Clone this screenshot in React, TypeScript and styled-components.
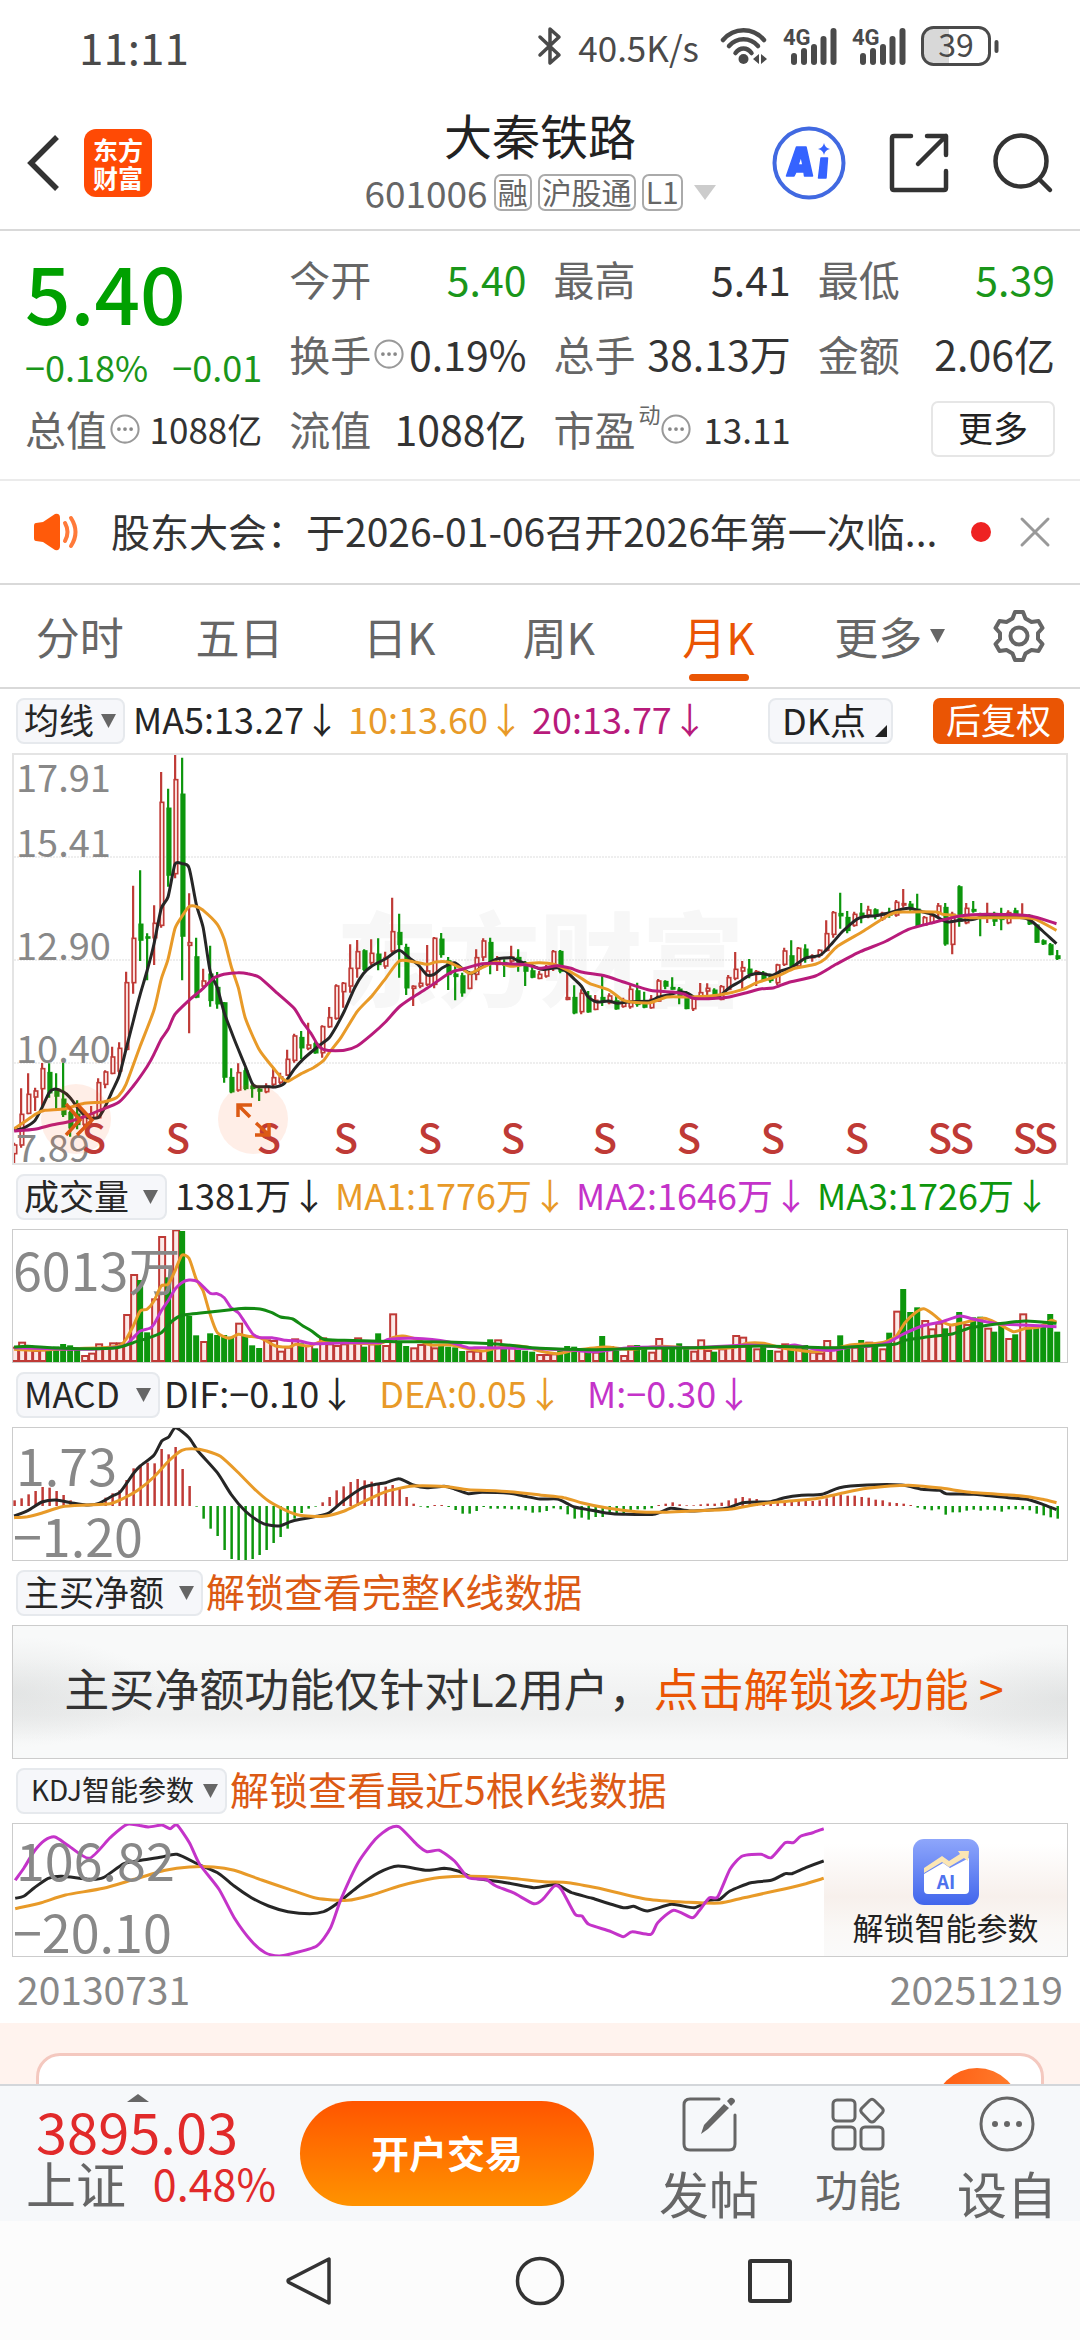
import React from 'react';
import styled, { createGlobalStyle } from 'styled-components';

const GlobalStyle = createGlobalStyle`
  *, *::before, *::after { box-sizing: border-box; }
  body {
    margin: 0;
    background: #fff;
    color: #222;
    font-family: "Noto Sans CJK SC", "Noto Sans", sans-serif;
    font-size: 36px;
    line-height: 1;
  }
  button, select {
    font: inherit;
    color: inherit;
    margin: 0;
    padding: 0;
    border: 0;
    background: none;
  }
  svg { display: block; flex: none; overflow: visible; }
`;

const C = {
  ink: '#262626',
  grey: '#666',
  mute: '#888',
  line: '#d9d9d9',
  red: '#bf3a36',
  green: '#0d960d',
  orange: '#ea5504',
  amber: '#e89a28',
  magenta: '#b81b7b',
  violet: '#c433c9',
};

/* ---------- layout ---------- */

const Screen = styled.div`
  display: flex;
  flex-direction: column;
  height: 100vh;
  overflow: hidden;
`;

const Scroller = styled.main`
  flex: 1;
  min-height: 0;
  overflow-y: auto;
  scrollbar-width: none;
`;

/* ---------- status bar ---------- */

const StatusBar = styled.div`
  display: flex;
  align-items: center;
  justify-content: space-between;
  height: 96px;
  padding: 0 81px 4px 79px;
  color: #4a4a4a;
`;

const Clock = styled.time`
  font-size: 44px;
`;

const StatusIcons = styled.div`
  display: flex;
  align-items: center;
  gap: 15px;
`;

const Speed = styled.span`
  margin-right: 6px;
  font-size: 35px;
`;

const Signal = styled.span`
  display: flex;
`;

/* ---------- header ---------- */

const Header = styled.header`
  display: grid;
  grid-template-columns: 1fr auto 1fr;
  align-items: center;
  height: 135px;
  padding: 0 26px;
  border-bottom: 2px solid ${C.line};
`;

const HeaderSide = styled.div<{ $end?: boolean }>`
  display: flex;
  align-items: center;
  gap: ${(p) => (p.$end ? 43 : 24)}px;
  justify-content: ${(p) => (p.$end ? 'flex-end' : 'flex-start')};
`;

const IconButton = styled.button`
  display: flex;
  align-items: center;
  justify-content: center;
`;

const Logo = styled.div`
  display: grid;
  place-content: center;
  width: 68px;
  height: 68px;
  border-radius: 12px;
  background: #ff4a05;
  color: #fff;
  font-size: 25px;
  font-weight: 700;
  line-height: 28px;
  text-align: center;
`;

const TitleBlock = styled.div`
  display: flex;
  flex-direction: column;
  align-items: center;
  gap: 16px;
  padding-bottom: 4px;
`;

const Title = styled.h1`
  margin: 0;
  font-size: 48px;
  font-weight: 400;
  line-height: 48px;
`;

const CodeRow = styled.div`
  display: flex;
  align-items: center;
  gap: 6px;
  color: ${C.grey};
  font-size: 37px;
`;

const Tag = styled.span`
  height: 37px;
  padding: 0 2px;
  border: 2px solid #aaa;
  border-radius: 7px;
  font-size: 30px;
  line-height: 31px;
`;

const TagCaret = styled.span`
  margin-left: 5px;
`;

/* ---------- quote ---------- */

const Quote = styled.section`
  display: grid;
  grid-template-columns: repeat(4, 1fr);
  grid-auto-rows: 75px;
  column-gap: 27px;
  padding: 10px 25px 13px;
  border-bottom: 2px solid #ebebeb;
`;

const PriceBlock = styled.div`
  grid-row: span 2;
  display: flex;
  flex-direction: column;
  color: #00a000;
`;

const Price = styled.strong`
  font-size: 80px;
  font-weight: 500;
  line-height: 98px;
`;

const Change = styled.div`
  display: flex;
  justify-content: space-between;
  font-size: 36px;
  line-height: 54px;
  color: #1a961a;
`;

const Stat = styled.div`
  display: flex;
  align-items: center;
  justify-content: space-between;
  white-space: nowrap;
`;

const StatLabel = styled.span`
  display: flex;
  align-items: center;
  gap: 3px;
  color: ${C.grey};
  font-size: 41px;
`;

const Raised = styled.sup`
  align-self: flex-start;
  margin-right: -3px;
  font-size: 22px;
  line-height: 10px;
  vertical-align: baseline;
`;

const StatValue = styled.span<{ $tone?: string; $small?: boolean }>`
  font-size: ${(p) => (p.$small ? 35 : 41)}px;
  color: ${(p) => p.$tone ?? '#333'};
`;

const MoreButton = styled.button`
  place-self: center end;
  width: 124px;
  height: 56px;
  padding-bottom: 5px;
  border: 2px solid #e6e6e6;
  border-radius: 7px;
  font-size: 35px;
`;

/* ---------- notice ---------- */

const Notice = styled.div`
  display: flex;
  align-items: center;
  height: 104px;
  padding: 0 29px 0 32px;
  border-bottom: 2px solid ${C.line};
`;

const NoticeText = styled.p`
  flex: 1;
  min-width: 0;
  margin: 0 0 0 31px;
  padding-bottom: 4px;
  overflow: hidden;
  color: #333;
  font-size: 39px;
  line-height: 60px;
  white-space: nowrap;
`;

const Dot = styled.span`
  width: 20px;
  height: 20px;
  margin-right: 28px;
  border-radius: 50%;
  background: #ee2222;
`;

/* ---------- period tabs ---------- */

const Tabs = styled.nav`
  display: flex;
  height: 104px;
  border-bottom: 2px solid ${C.line};
`;

const Tab = styled.button<{ $active?: boolean }>`
  position: relative;
  flex: 1;
  color: ${(p) => (p.$active ? C.orange : C.grey)};
  font-size: 44px;
  &::after {
    content: '';
    position: absolute;
    bottom: 6px;
    left: 50%;
    width: 60px;
    height: 7px;
    margin-left: -30px;
    border-radius: 4px;
    background: ${(p) => (p.$active ? C.orange : 'transparent')};
  }
`;

const TabCaret = styled.span`
  position: absolute;
  top: 44px;
  left: 50%;
  margin-left: 52px;
`;

const GearCell = styled(IconButton)`
  width: 122px;
`;

/* ---------- indicator rows ---------- */

const IndicatorRow = styled.div`
  display: flex;
  align-items: center;
  height: 64px;
  padding: 0 16px;
`;

const PickerBox = styled.label<{ $left: number; $right: number; $size: number }>`
  position: relative;
  display: flex;
  select {
    height: 46px;
    padding: 0 ${(p) => p.$right}px 4px ${(p) => p.$left}px;
    border: 2px solid #e6e9ed;
    border-radius: 8px;
    background: #f6f7fa;
    color: ${C.ink};
    font-size: ${(p) => p.$size}px;
    line-height: 38px;
    appearance: none;
  }
`;

const PickerCaret = styled.span`
  position: absolute;
  top: 16px;
  right: 9px;
  pointer-events: none;
`;

const Readings = styled.div<{ $wide?: boolean }>`
  display: flex;
  gap: ${(p) => (p.$wide ? 24 : 8)}px;
  margin-left: ${(p) => (p.$wide ? 4 : 8)}px;
  padding-bottom: 6px;
  white-space: nowrap;
`;

const Reading = styled.span<{ $tone: string }>`
  color: ${(p) => p.$tone};
`;

const RowEnd = styled.div`
  display: flex;
  gap: 40px;
  margin-left: auto;
`;

const DkButton = styled.button`
  display: flex;
  align-items: flex-end;
  gap: 9px;
  height: 46px;
  padding: 0 4px 5px 12px;
  border: 2px solid #e6e9ed;
  border-radius: 8px;
  background: #f6f7fa;
  font-size: 36px;
`;

const AdjustButton = styled.button`
  height: 46px;
  padding: 0 13px 5px;
  border-radius: 7px;
  background: ${C.orange};
  color: #fff;
  font-size: 35px;
`;

const UnlockLink = styled.a`
  margin-left: 3px;
  padding-bottom: 6px;
  color: #dc5a14;
  font-size: 39px;
  text-decoration: none;
`;

const Panel = styled.div<{ $strong?: boolean }>`
  margin: 0 12px;
  border: ${(p) => (p.$strong ? '2px solid #e4e4e4' : '1px solid #ccc')};
  svg { width: 100%; height: auto; overflow: hidden; }
`;

const LockedPanel = styled.div`
  display: flex;
  align-items: center;
  justify-content: center;
  height: 134px;
  margin: 0 12px;
  padding: 0 12px 10px 0;
  border: 1px solid #ccc;
  background:
    radial-gradient(ellipse 14% 42% at 0% 50%, rgba(205, 208, 208, .4), transparent),
    radial-gradient(ellipse 14% 42% at 100% 55%, rgba(205, 208, 208, .4), transparent),
    linear-gradient(#f8f9f9 25%, #f0f1f1 55%, #eff0f0 68%, #f8f9f9 88%);
  color: #333;
  font-size: 45px;
  white-space: nowrap;
  a { color: ${C.orange}; text-decoration: none; }
`;

const KdjPanel = styled.div`
  display: flex;
  margin: 0 12px;
  border: 1px solid #ccc;
`;

const KdjPlot = styled.div`
  flex: 811;
  svg { width: 100%; height: auto; overflow: hidden; }
`;

const AiUnlock = styled.button`
  flex: 243;
  display: flex;
  flex-direction: column;
  align-items: center;
  justify-content: center;
  gap: 6px;
  background: linear-gradient(#fff 15%, #f7f0ec 55%, #faf8f6 80%, #fafafa);
  font-size: 31px;
`;

const Dates = styled.div`
  display: flex;
  justify-content: space-between;
  height: 66px;
  padding: 0 17px;
  color: ${C.mute};
  font-size: 39px;
  line-height: 62px;
`;

const Promo = styled.section`
  padding: 30px 36px 0;
  background: #fff3ee;
`;

const PromoCard = styled.div`
  display: flex;
  justify-content: flex-end;
  height: 120px;
  padding: 12px 21px;
  border: 3px solid #f4c8bf;
  border-radius: 24px;
  background: #fff;
`;

const PromoBadge = styled.span`
  width: 86px;
  height: 86px;
  border-radius: 50%;
  background: linear-gradient(100deg, #ff5a10, #ff8534);
`;

/* ---------- bottom bars ---------- */

const ActionBar = styled.footer`
  display: flex;
  align-items: stretch;
  height: 137px;
  border-top: 2px solid #d3d6da;
  background: #f6f8fa;
`;

const IndexBlock = styled.button`
  display: flex;
  flex-direction: column;
  align-items: center;
  width: 300px;
  padding: 8px 24px 0 26px;
  color: #e12a2a;
`;

const IndexCaret = styled.span`
  margin-right: 26px;
`;

const IndexValue = styled.span`
  align-self: flex-start;
  margin-left: 10px;
  font-size: 56px;
  line-height: 56px;
`;

const IndexRow = styled.span`
  display: flex;
  align-items: center;
  justify-content: space-between;
  width: 100%;
  font-size: 43px;
  line-height: 48px;
`;

const IndexName = styled.span`
  color: ${C.grey};
  font-size: 50px;
`;

const TradeButton = styled.button`
  align-self: center;
  width: 294px;
  height: 105px;
  padding-bottom: 4px;
  border-radius: 53px;
  background: linear-gradient(#ff5500, #ff9300);
  color: #fff;
  font-size: 38px;
  font-weight: 700;
`;

const Actions = styled.div`
  flex: 1;
  display: flex;
  justify-content: space-between;
  padding: 0 23px 0 65px;
`;

const Action = styled.button<{ $compact?: boolean }>`
  display: flex;
  flex-direction: column;
  align-items: center;
  padding-top: 10px;
  gap: 10px;
  color: ${C.grey};
  font-size: ${(p) => (p.$compact ? 43 : 50)}px;
  line-height: ${(p) => (p.$compact ? 52 : 61)}px;
`;

const SystemNav = styled.div`
  display: flex;
  justify-content: center;
  align-items: center;
  gap: 180px;
  height: 119px;
  background: #fcfcfc;
`;

/* ---------- small drawings ---------- */

const Caret = ({ w = 15, h = 14, fill = '#666', up = false }: { w?: number; h?: number; fill?: string; up?: boolean }) => (
  <svg width={w} height={h} viewBox="0 0 10 10" preserveAspectRatio="none" aria-hidden="true">
    <path d={up ? 'M0 10H10L5 0Z' : 'M0 0H10L5 10Z'} fill={fill} />
  </svg>
);

const Info = () => (
  <svg width="30" height="30" viewBox="0 0 32 32" aria-hidden="true">
    <circle cx="16" cy="16" r="14.500" fill="none" stroke="#999" strokeWidth="2.200" />
    <circle cx="9.500" cy="16" r="2" fill="#888" />
    <circle cx="16" cy="16" r="2" fill="#888" />
    <circle cx="22.500" cy="16" r="2" fill="#888" />
  </svg>
);

const SignalBars = () => (
  <Signal>
    <svg width="54" height="38" viewBox="0 0 54 38" aria-label="4G">
      <text x="0" y="18" fontSize="22" fontWeight="700" fill="#4a4a4a" fontFamily="Roboto, sans-serif">4G</text>
      {[[11, 27], [21, 22], [31, 18], [40.5, 10], [50.5, 2]].map(([x, y]) => (
        <path key={x} d={`M${x} ${y + 2}V35`} stroke="#4a4a4a" strokeWidth="6" strokeLinecap="round" />
      ))}
    </svg>
  </Signal>
);

/* ---------- chart data ---------- */

// Samples are stored on a fine grid: 2.904 units per pixel across, 3 per pixel down.
const UX = 2.904;
const UY = 3;
const HALF = 1568;
const barX = (i: number) => (41 + 20.33 * i) / UX;

type Pt = [number, number];
const line = (left: string, right: string, top: number) => {
  const parse = (s: string, dx: number): Pt[] =>
    s.trim().split(/\s+/).filter(Boolean).map((p) => {
      const [x, y] = p.split(',').map(Number);
      return [(x + dx) / UX, top + y / UY];
    });
  return [...parse(left, 0), ...parse(right, HALF)];
};

const smooth = (pts: Pt[]) => {
  let d = `M${pts[0][0].toFixed(1)} ${pts[0][1].toFixed(1)}`;
  for (let i = 1; i < pts.length; i++) {
    const a = pts[Math.max(i - 2, 0)];
    const b = pts[i - 1];
    const c = pts[i];
    const e = pts[Math.min(i + 1, pts.length - 1)];
    const k = 9;
    d += `C${(b[0] + (c[0] - a[0]) / k).toFixed(1)} ${(b[1] + (c[1] - a[1]) / k).toFixed(1)} ${(c[0] - (e[0] - b[0]) / k).toFixed(1)} ${(c[1] - (e[1] - b[1]) / k).toFixed(1)} ${c[0].toFixed(1)} ${c[1].toFixed(1)}`;
  }
  return d;
};

// colour, high, body top, body bottom, low
const CANDLES = `R1205,1212,1238,1275 R1042,1120,1212,1220 R997,1060,1117,1120 R1040,1050,1068,1110 R966,983,1043,1100
G967,995,1055,1070 G997,1050,1065,1110 G966,1075,1120,1128 G1110,1115,1160,1187 G1078,1120,1150,1165
R1115,1128,1150,1160 R1095,1120,1130,1150 R1012,1025,1130,1133 R988,993,1030,1042 R917,948,997,1000
R904,922,990,1000 R692,725,925,930 R434,592,725,758 G388,550,597,660 G577,588,590,718
R493,547,590,672 R93,184,553,560 G143,202,402,437 R40,116,398,412 G50,160,585,718
R457,605,613,877 G590,648,768,772 R683,720,735,742 G614,700,778,797 G693,740,788,803
G783,786,1008,1025 G982,1010,1052,1057 R967,995,1047,1052 G980,990,1042,1048 G1030,1036,1042,1070
G1040,1045,1050,1080 R1027,1036,1052,1057 R984,1010,1030,1042 R995,1008,1024,1030 R926,955,1002,1005
R878,885,958,965 G870,890,920,955 R845,912,922,928 G900,908,935,938 R853,857,935,950
R798,830,857,860 R730,735,832,836 R723,727,752,800 R610,682,735,755 R597,632,682,710
G625,630,685,690 R595,637,665,672 G592,640,670,688 R632,650,675,683 R470,572,630,640
G518,575,610,710 G608,620,740,762 R733,736,742,795 R680,727,735,742 R612,690,730,735
R588,592,730,742 G576,595,640,650 G648,660,700,747 G668,700,706,778 G695,705,755,767
R690,700,742,745 R625,650,700,718 R592,600,648,660 G590,605,665,700 R645,655,670,690
G655,665,672,708 R614,648,660,670 G625,650,665,692 G660,670,690,735 G665,690,708,712
R690,700,712,715 R672,680,705,710 R627,632,680,690 G627,632,690,697 R695,770,775,778
G733,770,815,820 R745,757,812,820 G750,765,812,815 R762,778,805,808 G705,770,778,795
R757,765,785,790 G762,780,803,806 R770,785,796,800 R733,745,797,803 G725,750,790,797
G752,790,798,802 R762,775,800,803 R714,720,780,783 G718,722,735,745 G709,740,744,746
G738,745,765,790 G750,765,802,805 R765,770,803,810 R726,755,765,772 R727,742,750,765
G742,748,768,775 R732,737,775,778 R702,710,745,748 R633,685,712,718 R660,680,690,745
G654,685,697,712 R687,692,700,735 G690,697,715,720 G698,705,718,725 R668,672,725,732
R620,630,670,675 G598,645,675,685 R618,622,675,682 G610,625,650,665 R640,645,650,662
R625,628,642,650 R538,578,628,632 R510,515,580,590 G455,518,524,563 G510,530,568,577
R512,520,553,557 G486,517,525,547 R494,507,522,532 G502,507,525,535 R512,517,533,540
G500,515,522,530 R477,484,522,527 R444,488,492,500 G480,490,500,510 G458,505,553,557
R525,530,552,555 R518,525,545,550 R486,495,515,530 G486,500,608,614 R512,520,610,640
G433,438,540,557 R486,502,545,550 G480,506,510,515 G515,522,530,586 R485,522,530,546
G512,518,540,555 G500,525,535,568 R508,515,545,550 G500,510,520,527 R487,522,526,532
G520,524,548,552 G550,553,603,606 G595,600,608,612 G606,612,640,643 G627,645,652,657`
  .split(/\s+/)
  .map((s) => ({ up: s[0] === 'R', v: s.slice(1).split(',').map((n) => 740 + Number(n) / UY) }));

const nums = (s: string) => s.trim().split(/\s+/).map(Number);

const VOLUME = nums(`380 365 376 390 388 385 380 372 376 388 405 398 370 380 367 367 282 162 180 337 235 48 172 28 33
288 346 363 340 345 345 350 308 345 376 384 358 360 392 380 355 370 375 385 352 370 375 370 360 352
380 370 340 375 280 365 378 382 372 370 382 378 380 382 393 392 392 390 358 358 378 375 390 392 395
402 402 400 385 378 380 390 395 395 348 378 392 405 376 375 378 395 354 380 378 370 378 392 358 390
395 385 380 345 350 370 385 375 390 392 370 385 380 375 395 398 360 380 346 378 380 360 365 375 385
338 272 207 276 262 300 325 308 325 312 276 312 292 290 323 335 310 354 343 280 325 318 318 282 335`);
const VOLUME_DOWN = new Set([25, 79, 127]);

const HIST = nums(`838 832 820 810 798 800 810 822 838 848 853 850 845 830 817 808 777 742 733 725 727 684 700 678 744
795 857 893 923 945 987 1014 1017 1020 1014 1002 987 966 948 923 893 876 863 857 844 828 808 796 783 774
778 782 790 797 792 803 828 848 857 860 852 852 858 867 878 878 870 858 863 863 863 865 865 868 875
874 870 862 865 880 893 890 896 888 888 880 882 876 868 865 865 862 852 848 844 850 853 853 850 848
848 845 838 832 828 832 834 840 843 843 840 838 838 837 840 838 832 822 820 824 824 828 830 836 838
844 846 848 852 860 865 868 865 881 874 874 869 866 869 866 868 872 865 865 865 868 878 883 889 893`);

const MA5 = line(
  `41,1165 60,1165 80,1155 102,1138 122,1100 143,1055 160,1044 183,1052 204,1070 224,1098 250,1128 285,1130 305,1098 326,1050 346,1005 366,925 387,840 407,760 427,690 447,610 468,503 488,468 508,370 528,368 549,380 570,490 590,560 610,690 631,740 651,815 671,870 692,925 712,975 732,1027 745,1037 773,1037 800,1038 825,1028 854,985 880,955 925,915 956,890 980,850 1000,810 1030,740 1055,698 1080,675 1120,653 1159,628 1190,652 1215,672 1240,702 1261,700 1285,680 1320,665 1345,685 1370,697 1400,678 1440,655 1485,650 1505,660 1530,668`,
  `0,684 18,685 50,680 75,690 100,715 120,735 140,768 165,783 200,780 225,787 262,782 320,780 345,768 380,760 405,752 430,757 450,770 480,772 520,765 550,740 580,722 610,702 640,697 675,703 700,690 730,680 770,652 815,642 850,605 880,570 920,535 940,527 975,524 1010,517 1050,505 1075,502 1110,512 1140,520 1165,535 1185,543 1220,538 1260,535 1300,523 1370,528 1410,532 1430,542 1460,570 1500,608`, 740);
const MA10 = line(
  `41,1163 75,1140 105,1118 130,1108 190,1103 240,1088 300,1083 330,1074 346,1063 366,1030 407,915 447,808 468,715 488,655 508,563 528,527 549,497 565,495 590,508 631,550 651,595 671,675 692,740 712,830 752,925 793,980 820,1013 838,1020 875,998 910,980 940,958 956,935 990,890 1037,812 1080,765 1120,712 1159,660 1200,662 1240,670 1265,663 1300,663 1340,682 1365,697 1400,680 1440,663 1485,676 1540,667`,
  `0,665 40,670 75,685 110,705 145,728 200,747 240,777 265,783 320,785 370,768 440,768 520,762 590,745 630,725 690,705 740,682 800,670 830,652 865,615 940,570 1000,530 1030,515 1060,513 1150,513 1170,520 1200,523 1250,530 1400,530 1440,535 1500,568`, 740);
const MA20 = line(
  `41,1170 100,1165 150,1152 200,1142 250,1125 285,1110 346,1083 387,1035 427,977 447,940 468,895 488,865 508,820 549,778 590,742 620,712 650,700 690,695 720,698 755,710 800,752 854,802 880,845 905,880 925,915 950,928 1000,928 1037,915 1080,880 1120,842 1159,798 1200,768 1240,742 1300,700 1320,690 1345,684 1400,668 1470,668 1530,672`,
  `0,682 50,674 90,682 120,693 190,705 240,722 320,748 385,753 420,760 445,772 490,773 550,768 600,755 640,744 680,740 720,725 800,705 860,670 930,632 1000,603 1070,565 1140,545 1220,525 1300,520 1420,524 1500,548`, 740);

const VMA1 = line(
  `41,385 100,388 200,383 300,380 346,375 366,355 387,315 407,270 427,265 447,240 468,195 488,190 508,150 528,103 549,112 570,175 590,210 610,280 631,335 665,352 692,340 720,346 755,350 800,375 840,378 860,370 895,375 940,360 1000,365 1100,368 1140,350 1170,345 1210,355 1250,372 1310,372 1400,390 1470,375 1530,378`,
  `0,390 50,398 100,388 190,378 260,385 350,376 420,380 520,382 570,378 600,367 650,367 700,380 800,392 860,382 900,372 980,367 1010,360 1035,345 1060,305 1090,275 1115,263 1140,278 1165,300 1195,312 1230,305 1290,292 1330,308 1375,332 1410,322 1450,318 1485,298 1500,304`, 1220);
const VMA2 = line(
  `41,380 150,383 250,385 330,380 366,372 387,350 407,330 435,322 447,310 468,270 488,240 508,205 528,185 549,177 575,182 610,217 631,218 651,230 671,260 692,275 712,305 735,340 755,350 790,350 830,358 870,360 910,368 1000,365 1100,365 1130,355 1200,352 1300,362 1360,380 1400,380`,
  `0,383 100,388 160,392 260,380 350,378 450,380 600,372 700,378 740,372 800,385 850,388 900,378 960,375 1010,365 1050,342 1110,315 1165,303 1220,285 1260,295 1330,308 1400,312 1500,317`, 1220);
const VMA3 = line(
  `41,378 80,376 150,380 250,383 340,380 387,365 427,352 468,335 500,300 530,283 610,273 670,266 712,262 755,264 790,275 815,288 850,294 880,315 905,330 940,355 1000,358 1150,362 1300,363 1450,370`,
  `0,382 150,386 300,382 450,380 640,375 760,378 860,380 960,374 1030,370 1060,358 1110,350 1200,338 1250,320 1320,310 1410,300 1500,307`, 1220);

const DIF = line(
  `41,885 82,868 122,843 163,837 204,845 250,852 285,848 326,825 350,812 387,758 407,735 447,703 470,660 490,648 510,620 549,650 575,690 631,755 671,820 712,870 755,903 780,912 815,914 850,900 920,886 956,875 997,840 1050,802 1080,792 1120,785 1159,773 1200,792 1240,800 1290,796 1320,804 1360,818 1400,814 1480,817 1520,825`,
  `0,834 50,834 80,848 100,858 140,866 200,877 240,880 330,880 380,862 440,870 540,862 590,845 670,842 710,830 760,823 820,820 870,800 950,792 1050,792 1110,805 1160,808 1180,818 1260,820 1360,830 1420,836 1460,850 1500,866`, 1220);
const DEA = line(
  `41,890 80,887 120,877 180,857 250,852 320,848 366,828 400,808 447,768 490,720 528,688 560,683 600,690 640,706 690,753 740,805 780,840 830,868 870,883 940,886 1000,870 1050,845 1120,812 1200,795 1300,797 1360,806 1480,812`,
  `0,822 70,830 120,845 200,862 280,872 360,874 440,870 550,865 620,852 700,842 800,833 870,818 950,802 1070,793 1170,802 1250,814 1400,825 1460,835 1500,845`, 1220);

// The KDJ samples use a grid half as fine across.
const kdj = (s: string) => smooth(line(s.trim().split(/\s+/).map((p) => {
  const [x, y] = p.split(',').map(Number);
  return `${x * 2},${y}`;
}).join(' '), '', 1760));
const K_LINE = kdj(`22,412 35,405 50,380 70,352 90,346 130,355 150,350 180,308 205,298 235,288 257,280 290,312 318,338 340,375 365,410 390,435 418,452 450,458 470,452 488,430 518,380 550,335 578,315 620,328 645,322 665,330 690,352 735,365 775,380 800,372 810,372 830,395 860,412 905,440 920,436 940,450 975,430 1008,440 1030,418 1045,415 1060,390 1090,365 1120,358 1140,338 1150,338 1170,320 1196,300`);
const D_LINE = kdj(`22,443 60,425 95,402 150,382 195,355 240,328 275,318 310,318 340,328 380,357 420,385 460,412 505,418 540,402 580,375 630,352 670,346 720,348 790,362 825,365 870,382 940,415 1000,424 1045,426 1080,410 1130,388 1170,368 1196,352`);
const J_LINE = kdj(`22,358 35,320 50,270 65,238 80,228 100,255 130,292 160,230 185,190 215,198 235,192 247,203 257,192 275,245 290,310 318,385 340,470 365,540 385,575 405,585 420,580 460,555 480,500 495,415 520,305 545,235 565,202 580,198 605,250 620,272 638,268 660,300 680,350 705,355 720,375 745,395 775,428 788,415 805,375 815,385 835,460 845,465 855,490 885,510 905,527 918,512 945,520 955,485 978,448 1005,470 1015,450 1030,410 1042,408 1060,325 1078,285 1105,280 1120,290 1140,245 1152,245 1163,225 1180,215 1196,203`);

const Curve = ({ d, c, w = 3 }: { d: string; c: string; w?: number }) => (
  <path d={d} fill="none" stroke={c} strokeWidth={w} strokeLinejoin="round" />
);

const SELL_X = [94, 178, 269, 346, 430, 513, 605, 689, 773, 857, 940, 962, 1025, 1046];

const PriceChart = () => (
  <svg viewBox="14 754 1052 408" role="img" aria-label="月K线图">
    <text x="336" y="998" fontSize="102" fontWeight="900" fill="#f7f7f7">东方财富</text>
    {[856, 959, 1062].map((y) => (
      <path key={y} d={`M14 ${y}H1066`} stroke="#ddd" strokeWidth="1" strokeDasharray="2 1" />
    ))}
    {CANDLES.map(({ up, v: [h, t, b, l] }, i) => {
      const x = barX(i);
      const c = up ? C.red : C.green;
      return (
        <g key={i} stroke={c}>
          <path d={`M${x} ${h}V${t}M${x} ${b}V${l}`} strokeWidth="2.200" />
          <rect x={x - 1} y={t} width="3.600" height={Math.max(b - t, 1)} fill={up ? '#fbe3e0' : c} strokeWidth="1.600" />
        </g>
      );
    })}
    <Curve d={smooth(MA5)} c={C.ink} />
    <Curve d={smooth(MA10)} c={C.amber} />
    <Curve d={smooth(MA20)} c={C.magenta} />
    <g fill={C.mute} fontSize="38">
      <text x="16" y="791">17.91</text>
      <text x="16" y="856">15.41</text>
      <text x="16" y="959">12.90</text>
      <text x="16" y="1062">10.40</text>
      <text x="16" y="1161">7.89</text>
    </g>
    <circle cx="76" cy="1118" r="35" fill="#ff5a14" opacity=".1" />
    <circle cx="253" cy="1118" r="35" fill="#ff5a14" opacity=".1" />
    <g fill={C.red} fontSize="40" fontWeight="500" textAnchor="middle">
      {SELL_X.map((x) => <text key={x} x={x} y="1152">S</text>)}
    </g>
    <g fill="none" stroke="#dc5a14" strokeWidth="3.500">
      <path d="M66 1103L80 1119L66 1134M77 1103L92 1119L77 1134" />
      <path d="M238 1116V1104H252M239 1105L250 1116M269 1122V1134H255M268 1133L256 1122" />
    </g>
  </svg>
);

const VolumeChart = () => (
  <svg viewBox="13 1229 1054 132" role="img" aria-label="成交量图">
    {VOLUME.map((top, i) => {
      const up = CANDLES[i].up && !VOLUME_DOWN.has(i);
      const y = 1220 + top / UY;
      const x = barX(i);
      return up
        ? <rect key={i} x={x - 2} y={y} width="6" height={1360 - y} fill="#fbeae8" stroke={C.red} strokeWidth="2" />
        : <rect key={i} x={x - 3} y={y - 1} width="6" height={1362 - y} fill={C.green} />;
    })}
    <text x="13" y="1290" fontSize="52" fill={C.mute}>6013万</text>
    <Curve d={smooth(VMA1)} c={C.amber} />
    <Curve d={smooth(VMA2)} c={C.violet} />
    <Curve d={smooth(VMA3)} c="#138a13" />
  </svg>
);

const MacdChart = () => (
  <svg viewBox="13 1427 1054 132" role="img" aria-label="MACD图">
    {HIST.map((v, i) => (
      <path key={i} d={`M${barX(i) + 0.5} 1505V${1220 + v / UY}`} stroke={v < 855 ? C.red : C.green} strokeWidth="2.500" />
    ))}
    <g fill={C.mute} fontSize="52">
      <text x="16" y="1485">1.73</text>
      <text x="13" y="1556">−1.20</text>
    </g>
    <Curve d={smooth(DIF)} c={C.ink} />
    <Curve d={smooth(DEA)} c={C.amber} />
  </svg>
);

const KdjChart = () => (
  <svg viewBox="13 1823 811 132" role="img" aria-label="KDJ图">
    <Curve d={K_LINE} c={C.ink} />
    <Curve d={D_LINE} c={C.amber} />
    <Curve d={J_LINE} c={C.violet} />
    <g fill={C.mute} fontSize="52">
      <text x="16" y="1880">106.82</text>
      <text x="13" y="1952">−20.10</text>
    </g>
  </svg>
);

/* ---------- composed parts ---------- */

const Picker = ({ name, left = 6, right = 36, size = 35 }: { name: string; left?: number; right?: number; size?: number }) => (
  <PickerBox $left={left} $right={right} $size={size}>
    <select aria-label={name} defaultValue={name}>
      <option>{name}</option>
    </select>
    <PickerCaret><Caret /></PickerCaret>
  </PickerBox>
);

const StatItem = ({ label, value, tone, small, info, raised }: {
  label: string; value: string; tone?: string; small?: boolean; info?: boolean; raised?: string;
}) => (
  <Stat>
    <StatLabel>
      {label}
      {raised && <Raised>{raised}</Raised>}
      {info && <Info />}
    </StatLabel>
    <StatValue $tone={tone} $small={small}>{value}</StatValue>
  </Stat>
);

export default function App() {
  return (
    <Screen>
      <GlobalStyle />
      <Scroller>
        <StatusBar>
          <Clock>11:11</Clock>
          <StatusIcons>
            <svg width="26" height="40" viewBox="0 0 26 40" fill="none" stroke="#4a4a4a" strokeWidth="3.500" strokeLinejoin="round" strokeLinecap="round" aria-label="蓝牙">
              <path d="M3 11L22 29L13 37V3L22 11L3 29" />
            </svg>
            <Speed>40.5K/s</Speed>
            <svg width="48" height="38" viewBox="0 0 48 38" aria-label="Wi-Fi">
              <g fill="none" stroke="#4a4a4a" strokeWidth="4.500" strokeLinecap="round">
                <path d="M3 13C14 0 33 0 44 13" />
                <path d="M9 19C17 10 30 10 38 19" />
                <path d="M15.500 26C20 20 27 20 31.500 26" />
              </g>
              <circle cx="23.500" cy="32" r="5" fill="#4a4a4a" />
              <path d="M39 27V37L33 32ZM41 27V37L47 32Z" fill="#4a4a4a" />
            </svg>
            <SignalBars />
            <SignalBars />
            <svg width="78" height="40" viewBox="0 0 78 40" aria-label="电量 39">
              <path d="M12 3H28V37H12Q3 37 3 28V12Q3 3 12 3Z" fill="#d8d8d8" />
              <rect x="1.500" y="1.500" width="67" height="37" rx="11" fill="none" stroke="#4a4a4a" strokeWidth="3" />
              <path d="M75.500 16V25" stroke="#4a4a4a" strokeWidth="4" strokeLinecap="round" />
              <text x="35" y="31" fontSize="32" textAnchor="middle" fill="#4a4a4a">39</text>
            </svg>
          </StatusIcons>
        </StatusBar>

        <Header>
          <HeaderSide>
            <IconButton aria-label="返回">
              <svg width="34" height="58" viewBox="0 0 34 58" fill="none" stroke="#333" strokeWidth="5.500">
                <path d="M31 3L5 29L31 55" />
              </svg>
            </IconButton>
            <Logo>东方<br />财富</Logo>
          </HeaderSide>
          <TitleBlock>
            <Title>大秦铁路</Title>
            <CodeRow>
              601006
              <Tag>融</Tag>
              <Tag>沪股通</Tag>
              <Tag>L1</Tag>
              <TagCaret><Caret w={22} h={15} fill="#ccc" /></TagCaret>
            </CodeRow>
          </TitleBlock>
          <HeaderSide $end>
            <IconButton aria-label="AI 助手">
              <svg width="74" height="74" viewBox="0 0 74 74">
                <circle cx="37" cy="37" r="34.500" fill="#fff" stroke="#4169e1" strokeWidth="4" />
                <path d="M24.500 21H34L40.500 50H32.500L32 46H24L22 50H14.500ZM29 30L26 39H31Z" fill="#3563ff" fillRule="evenodd" stroke="#3563ff" strokeWidth="1.500" strokeLinejoin="round" />
                <path d="M49 32H55.500L54 52H46.500Z" fill="#3563ff" stroke="#3563ff" strokeWidth="1.500" strokeLinejoin="round" />
                <path d="M52 17Q53 22 58 23Q53 24 52 29Q51 24 46 23Q51 22 52 17Z" fill="#3563ff" />
              </svg>
            </IconButton>
            <IconButton aria-label="分享">
              <svg width="60" height="60" viewBox="0 0 60 60" fill="none" stroke="#333" strokeWidth="4.500" strokeLinecap="round" strokeLinejoin="round">
                <path d="M22 3H5Q3 3 3 5V55Q3 57 5 57H55Q57 57 57 55V38" />
                <path d="M38 3H57V22M57 3L29 31" />
              </svg>
            </IconButton>
            <IconButton aria-label="搜索">
              <svg width="62" height="62" viewBox="0 0 62 62" fill="none" stroke="#333" strokeWidth="4.500" strokeLinecap="round">
                <circle cx="29" cy="29" r="25.500" />
                <path d="M48 48L58 58" />
              </svg>
            </IconButton>
          </HeaderSide>
        </Header>

        <Quote>
          <PriceBlock>
            <Price>5.40</Price>
            <Change><span>−0.18%</span><span>−0.01</span></Change>
          </PriceBlock>
          <StatItem label="今开" value="5.40" tone="#1a961a" />
          <StatItem label="最高" value="5.41" />
          <StatItem label="最低" value="5.39" tone="#1a961a" />
          <StatItem label="换手" value="0.19%" info />
          <StatItem label="总手" value="38.13万" />
          <StatItem label="金额" value="2.06亿" />
          <StatItem label="总值" value="1088亿" info small />
          <StatItem label="流值" value="1088亿" />
          <StatItem label="市盈" value="13.11" info small raised="动" />
          <MoreButton>更多</MoreButton>
        </Quote>

        <Notice>
          <svg width="48" height="38" viewBox="0 0 48 38" aria-hidden="true">
            <path d="M4 10Q2 10 2 13V25Q2 28 4 28L11 29L23 37Q28 38 28 33V5Q28 0 23 1L11 9Z" fill="#ff5a0a" />
            <path d="M33 10Q38 19 33 28M39 5Q48 19 39 33" fill="none" stroke="#ff7a3a" strokeWidth="4" strokeLinecap="round" />
          </svg>
          <NoticeText>股东大会：于2026-01-06召开2026年第一次临...</NoticeText>
          <Dot />
          <IconButton aria-label="关闭">
            <svg width="32" height="32" viewBox="0 0 32 32" stroke="#999" strokeWidth="3" strokeLinecap="round">
              <path d="M3 3L29 29M29 3L3 29" />
            </svg>
          </IconButton>
        </Notice>

        <Tabs>
          <Tab>分时</Tab>
          <Tab>五日</Tab>
          <Tab>日K</Tab>
          <Tab>周K</Tab>
          <Tab $active>月K</Tab>
          <Tab>更多<TabCaret><Caret /></TabCaret></Tab>
          <GearCell aria-label="设置">
            <svg width="54" height="54" viewBox="0 0 54 54" fill="none" stroke="#666" strokeWidth="4" strokeLinejoin="round">
              <path d="M23 3H31L33.500 9.500L39.500 13L46.500 12L50.500 19L46 24V30L50.500 35L46.500 42L39.500 41L33.500 44.500L31 51H23L20.500 44.500L14.500 41L7.500 42L3.500 35L8 30V24L3.500 19L7.500 12L14.500 13L20.500 9.500Z" />
              <circle cx="27" cy="27" r="8.500" />
            </svg>
          </GearCell>
        </Tabs>

        <IndicatorRow>
          <Picker name="均线" right={28} />
          <Readings>
            <Reading $tone={C.ink}>MA5:13.27↓</Reading>
            <Reading $tone={C.amber}>10:13.60↓</Reading>
            <Reading $tone={C.magenta}>20:13.77↓</Reading>
          </Readings>
          <RowEnd>
            <DkButton>
              DK点
              <svg width="12" height="12" viewBox="0 0 12 12" aria-hidden="true"><path d="M12 0V12H0Z" fill="#222" /></svg>
            </DkButton>
            <AdjustButton>后复权</AdjustButton>
          </RowEnd>
        </IndicatorRow>
        <Panel $strong><PriceChart /></Panel>

        <IndicatorRow>
          <Picker name="成交量" right={35} />
          <Readings>
            <Reading $tone={C.ink}>1381万↓</Reading>
            <Reading $tone={C.amber}>MA1:1776万↓</Reading>
            <Reading $tone={C.violet}>MA2:1646万↓</Reading>
            <Reading $tone={C.green}>MA3:1726万↓</Reading>
          </Readings>
        </IndicatorRow>
        <Panel><VolumeChart /></Panel>

        <IndicatorRow>
          <Picker name="MACD" right={38} />
          <Readings $wide>
            <Reading $tone={C.ink}>DIF:−0.10↓</Reading>
            <Reading $tone={C.amber}>DEA:0.05↓</Reading>
            <Reading $tone={C.violet}>M:−0.30↓</Reading>
          </Readings>
        </IndicatorRow>
        <Panel><MacdChart /></Panel>

        <IndicatorRow>
          <Picker name="主买净额" />
          <UnlockLink href="#unlock">解锁查看完整K线数据</UnlockLink>
        </IndicatorRow>
        <LockedPanel>
          主买净额功能仅针对L2用户，<a href="#unlock">点击解锁该功能 &gt;</a>
        </LockedPanel>

        <IndicatorRow>
          <Picker name="KDJ智能参数" left={13} right={30} size={28} />
          <UnlockLink href="#unlock">解锁查看最近5根K线数据</UnlockLink>
        </IndicatorRow>
        <KdjPanel>
          <KdjPlot><KdjChart /></KdjPlot>
          <AiUnlock>
            <svg width="66" height="66" viewBox="0 0 66 66" aria-hidden="true">
              <defs>
                <linearGradient id="aiTile" x1="0" y1="0" x2="0" y2="1">
                  <stop offset="0" stopColor="#8ea6fb" />
                  <stop offset="1" stopColor="#4166ec" />
                </linearGradient>
              </defs>
              <rect width="66" height="66" rx="11" fill="url(#aiTile)" />
              <path d="M11 35L30 24L37 29L56 19V51Q56 55 52 55H15Q11 55 11 51Z" fill="#fff" />
              <path d="M11 29L29 17L36 22L47 15L45 12L56 12L55 22L51 19L36 28L29 23L11 34Z" fill="#fbe6b4" />
              <text x="33" y="50" fontSize="19" fontWeight="700" textAnchor="middle" fill="#4e72ee">AI</text>
            </svg>
            解锁智能参数
          </AiUnlock>
        </KdjPanel>

        <Dates><span>20130731</span><span>20251219</span></Dates>

        <Promo>
          <PromoCard><PromoBadge /></PromoCard>
        </Promo>
      </Scroller>

      <ActionBar>
        <IndexBlock>
          <IndexCaret><Caret w={22} h={8} up /></IndexCaret>
          <IndexValue>3895.03</IndexValue>
          <IndexRow><IndexName>上证</IndexName>0.48%</IndexRow>
        </IndexBlock>
        <TradeButton>开户交易</TradeButton>
        <Actions>
          <Action>
            <svg width="56" height="56" viewBox="0 0 56 56" fill="none" stroke="#666" strokeWidth="3" strokeLinecap="round">
              <path d="M38 3H9Q3 3 3 9V48Q3 54 9 54H48Q54 54 54 48V19" />
              <path d="M20 38L23 29L43 8L48 12L27 33Z" fill="#666" stroke="none" />
              <path d="M46 5L49 2Q51 1 53 3Q55 5 53 7L50 10Z" fill="#666" stroke="none" />
            </svg>
            发帖
          </Action>
          <Action $compact>
            <svg width="56" height="56" viewBox="0 0 56 56" fill="none" stroke="#666" strokeWidth="3">
              <rect x="3" y="4" width="22" height="21" rx="4" />
              <rect x="3" y="31" width="22" height="22" rx="4" />
              <rect x="31" y="31" width="22" height="22" rx="4" />
              <path d="M39.500 4.500Q42 2 44.500 4.500L52.500 12.500Q54 14.500 52.500 16.500L44.500 25Q42 27 39.500 25L31.500 16.500Q30 14.500 31.500 12.500Z" />
            </svg>
            功能
          </Action>
          <Action>
            <svg width="56" height="56" viewBox="0 0 56 56">
              <circle cx="28" cy="28" r="26" fill="none" stroke="#666" strokeWidth="3" />
              <circle cx="16" cy="28" r="3" fill="#666" />
              <circle cx="28" cy="28" r="3" fill="#666" />
              <circle cx="40" cy="28" r="3" fill="#666" />
            </svg>
            设自
          </Action>
        </Actions>
      </ActionBar>

      <SystemNav>
        <IconButton aria-label="后退">
          <svg width="50" height="50" viewBox="0 0 50 50" fill="none" stroke="#333" strokeWidth="3.500" strokeLinejoin="round">
            <path d="M44 3V47L4 26.500Q2 25 4 23.500Z" />
          </svg>
        </IconButton>
        <IconButton aria-label="主屏幕">
          <svg width="50" height="50" viewBox="0 0 50 50" fill="none" stroke="#333" strokeWidth="3.500">
            <circle cx="25" cy="25" r="22.500" />
          </svg>
        </IconButton>
        <IconButton aria-label="最近任务">
          <svg width="50" height="50" viewBox="0 0 50 50" fill="none" stroke="#333" strokeWidth="4">
            <rect x="5" y="5" width="40" height="40" rx="1" />
          </svg>
        </IconButton>
      </SystemNav>
    </Screen>
  );
}
